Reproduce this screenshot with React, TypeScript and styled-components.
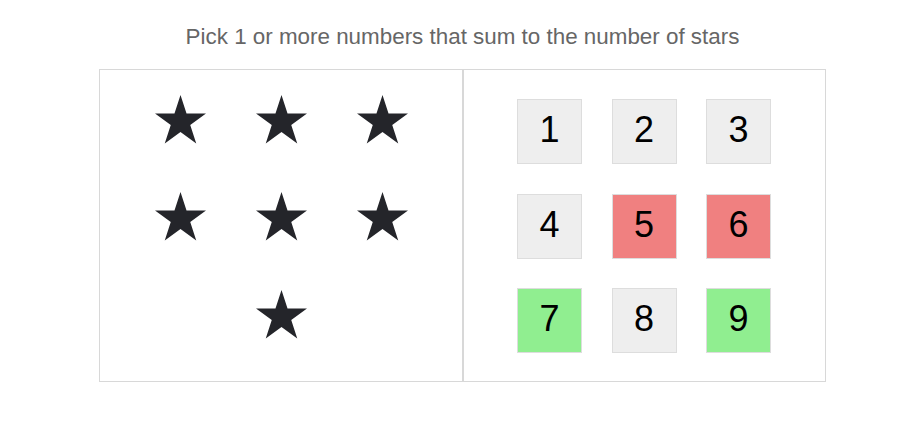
import React from "react";
import styled, { createGlobalStyle } from "styled-components";

const Global = createGlobalStyle`
  html, body { margin: 0; padding: 0; background: #fff; }
  body { font-family: "Liberation Sans", Arial, sans-serif; }
`;

const Game = styled.div`
  width: 727px;
  margin-left: 99px;
`;

const Help = styled.div`
  height: 69px;
  padding-top: 23px;
  box-sizing: border-box;
  text-align: center;
  color: #666;
  font-size: 22.4px;
  line-height: 28px;
`;

const Body = styled.div`
  display: flex;
`;

const Panel = styled.div<{ $w: number }>`
  width: ${(p) => p.$w}px;
  height: 313px;
  box-sizing: border-box;
  border: 1px solid #d8d8d8;
  display: flex;
  justify-content: center;
`;

const StarWrap = styled.div`
  width: 303px;
  display: flex;
  flex-wrap: wrap;
  justify-content: center;
  align-content: flex-start;
  padding-top: 0.5px;
`;

const StarCell = styled.div`
  width: 101px;
  height: 97.5px;
  display: flex;
  align-items: center;
  justify-content: center;
`;

const NumGrid = styled.div`
  display: grid;
  grid-template-columns: repeat(3, 65px);
  grid-auto-rows: 65px;
  gap: 29.5px;
  padding-top: 29px;
  margin-left: -1px;
`;

const statusColor: Record<string, string> = {
  available: "#eeeeee",
  wrong: "#f08080",
  candidate: "#90ee90",
};

const NumButton = styled.button<{ $status: string }>`
  box-sizing: border-box;
  width: 65px;
  height: 65px;
  margin: 0;
  padding: 0 0 3px;
  background: ${(p) => statusColor[p.$status]};
  border: 1px solid #dddddd;
  font-family: "Liberation Sans", Arial, sans-serif;
  font-size: 36px;
  color: #000;
  display: flex;
  align-items: center;
  justify-content: center;
`;

const Star = () => {
  const R = 26.8;
  const r = R * 0.382;
  const cx = 25.5;
  const cy = R;
  const pts: string[] = [];
  for (let i = 0; i < 10; i++) {
    const rad = i % 2 === 0 ? R : r;
    const a = (Math.PI / 5) * i - Math.PI / 2;
    pts.push(`${(cx + rad * Math.cos(a)).toFixed(2)},${(cy + rad * Math.sin(a)).toFixed(2)}`);
  }
  return (
    <svg width="51" height="49" viewBox="0 0 51 49">
      <polygon points={pts.join(" ")} fill="#24252a" />
    </svg>
  );
};

const statuses: Record<number, string> = {
  5: "wrong",
  6: "wrong",
  7: "candidate",
  9: "candidate",
};

export default function App() {
  return (
    <>
      <Global />
      <Game>
        <Help>Pick 1 or more numbers that sum to the number of stars</Help>
        <Body>
          <Panel $w={364}>
            <StarWrap>
              {Array.from({ length: 7 }, (_, i) => (
                <StarCell key={i}>
                  <Star />
                </StarCell>
              ))}
            </StarWrap>
          </Panel>
          <Panel $w={363}>
            <NumGrid>
              {Array.from({ length: 9 }, (_, i) => i + 1).map((n) => (
                <NumButton key={n} $status={statuses[n] || "available"}>
                  {n}
                </NumButton>
              ))}
            </NumGrid>
          </Panel>
        </Body>
      </Game>
    </>
  );
}
